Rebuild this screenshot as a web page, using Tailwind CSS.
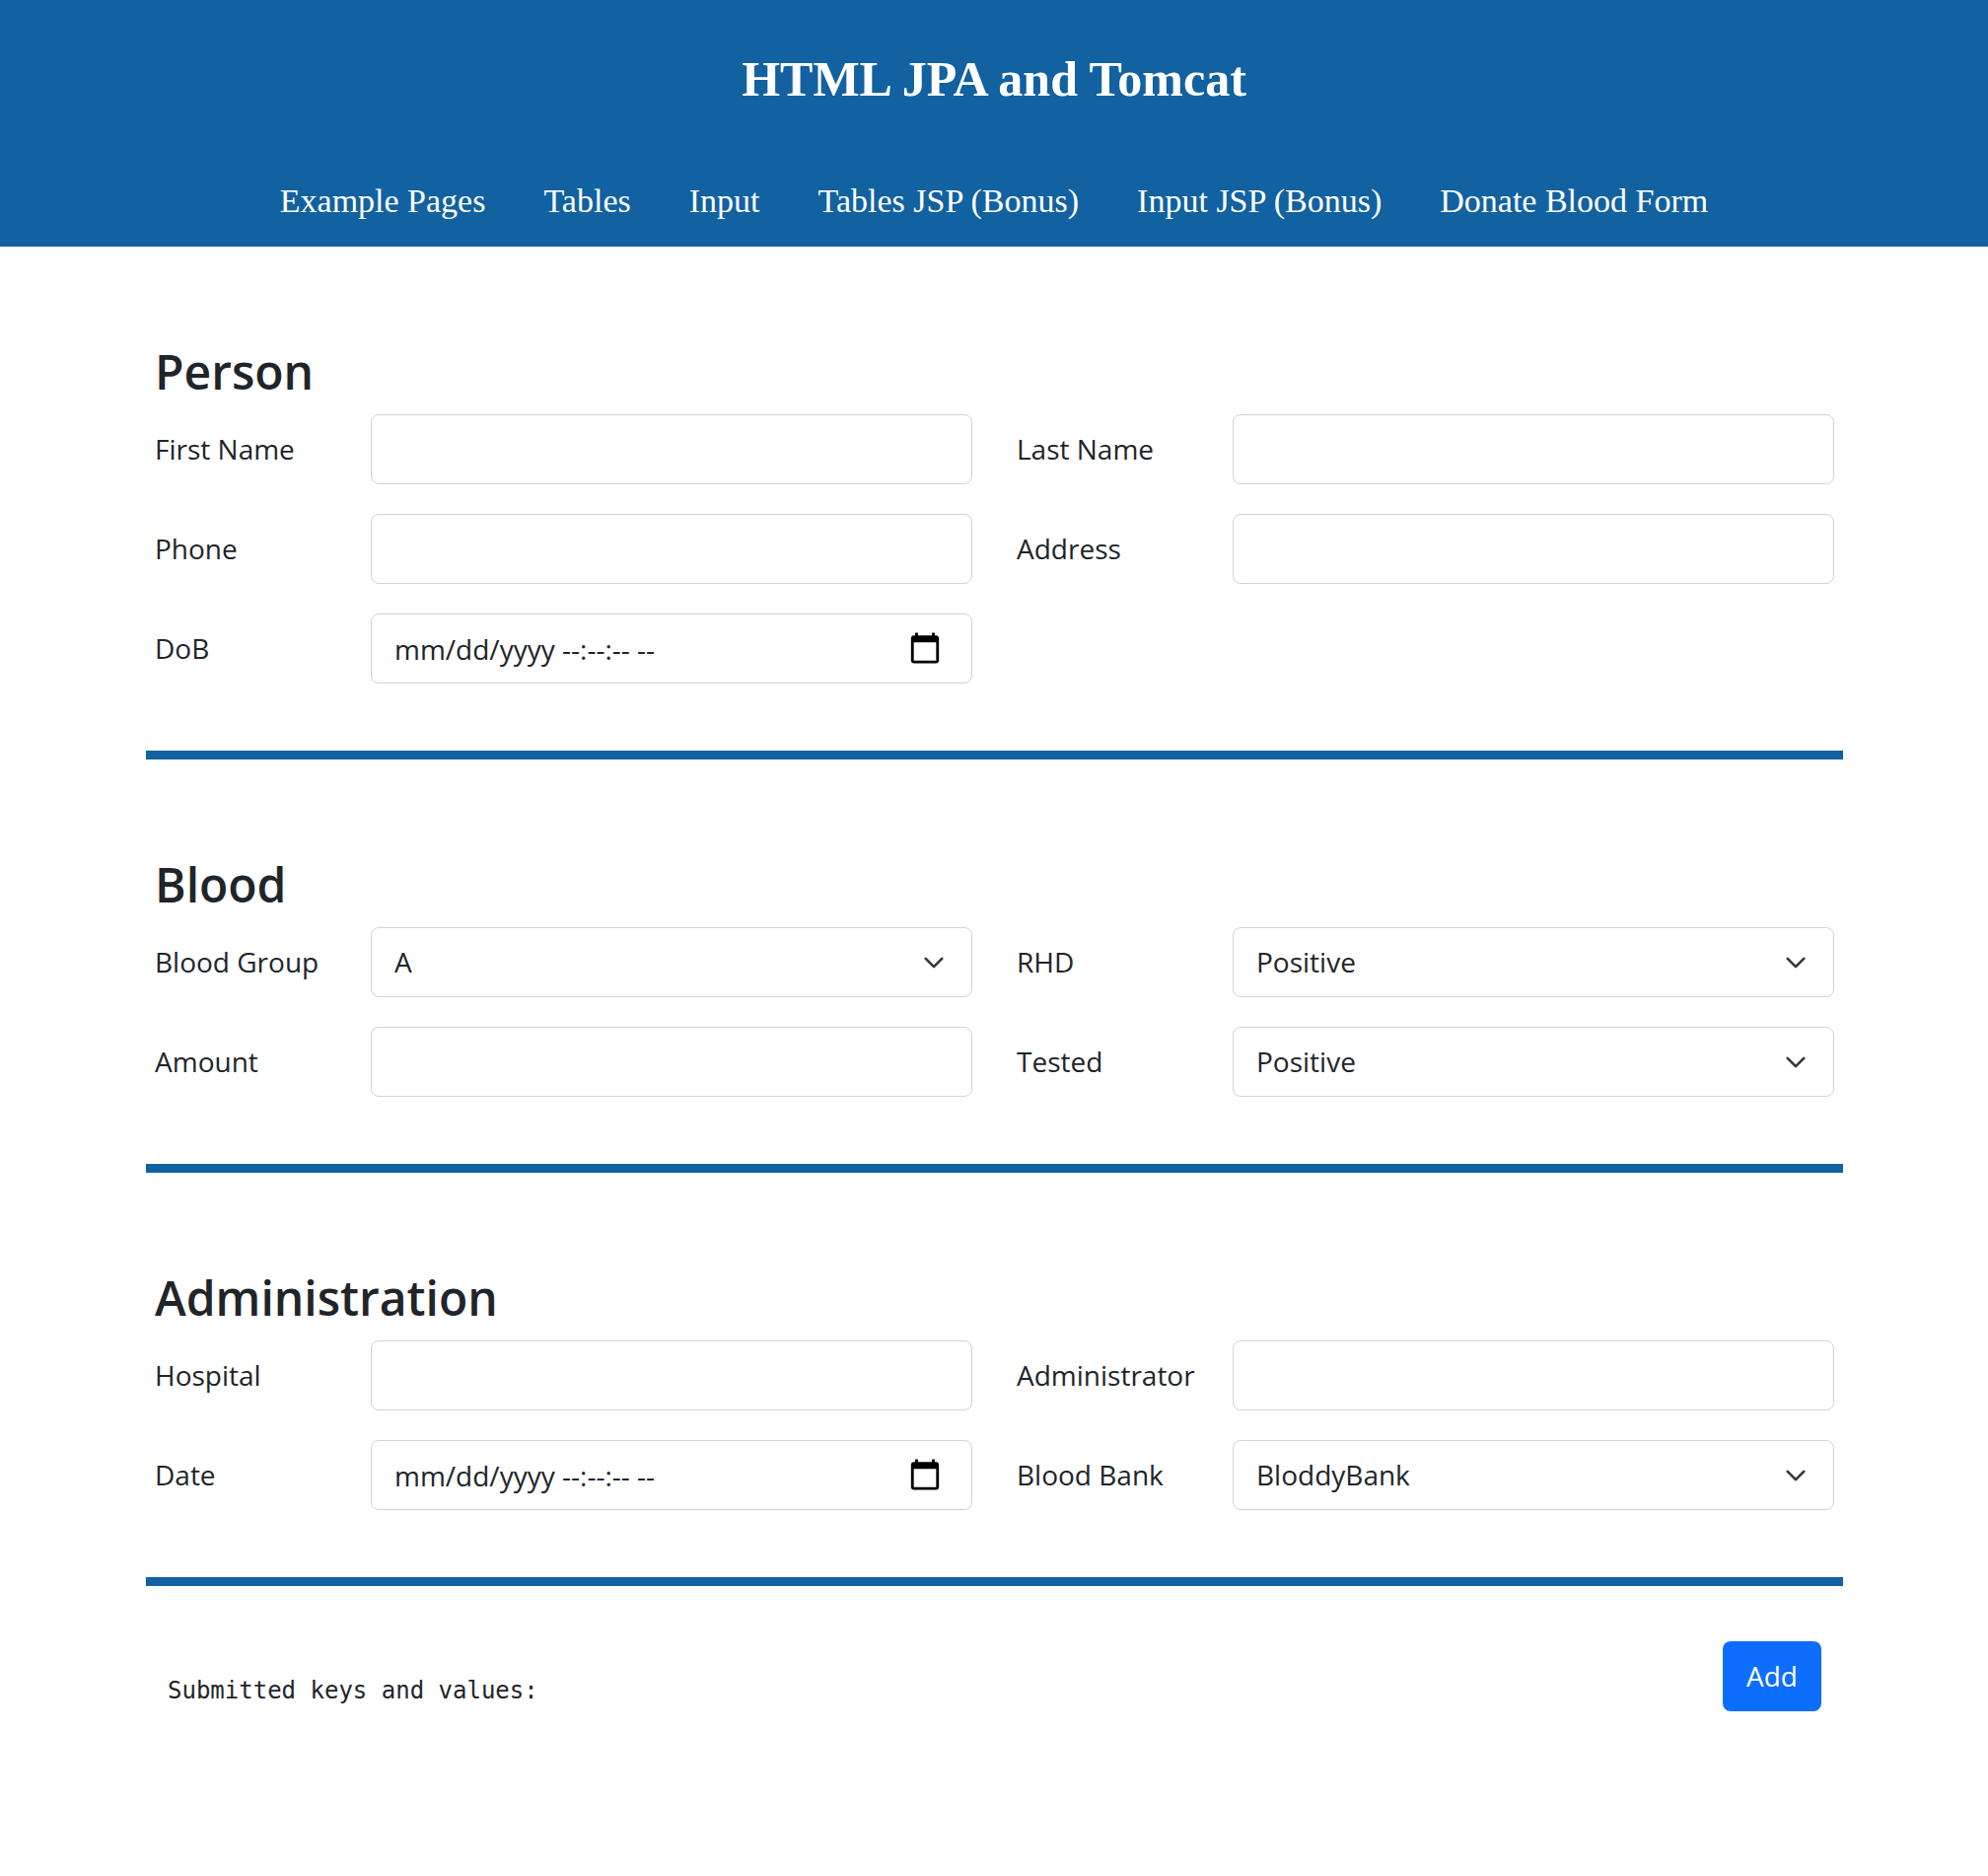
<!DOCTYPE html>
<html lang="en">
<head>
<meta charset="utf-8">
<meta name="viewport" content="width=device-width, initial-scale=1">
<title>Donate Blood Form</title>
<script src="https://cdn.jsdelivr.net/npm/@tailwindcss/browser@4"></script>
</head>
<body class="bg-white font-['Open_Sans',sans-serif] text-[28px] leading-[45px] text-[#212529]">
<header class="bg-[#1261a0] pt-[50px] pb-[24px] font-['Liberation_Serif',serif] text-white">
  <h1 class="text-center text-[50px] leading-[60px] font-bold">HTML JPA and Tomcat</h1>
  <nav class="mt-[72px] flex flex-wrap justify-center gap-x-[59px] text-[34px] leading-[44px]">
    <a href="#">Example Pages</a>
    <a href="#">Tables</a>
    <a href="#">Input</a>
    <a href="#">Tables JSP (Bonus)</a>
    <a href="#">Input JSP (Bonus)</a>
    <a href="#">Donate Blood Form</a>
  </nav>
</header>
<main class="pr-[147px] pb-[120px] pl-[148px]">
  <form>
    <section class="border-b-9 border-[#1261a0] px-[9px] pt-[95px] pb-[68px]">
      <h2 class="mb-[12px] text-[48px] leading-[63px] font-semibold">Person</h2>
      <div class="grid grid-cols-2 gap-x-[45px] gap-y-[30px]">
        <div class="flex items-center">
          <label for="first" class="w-[219px] shrink-0">First Name</label>
          <input id="first" type="text" class="h-[71px] min-w-0 flex-1 rounded-[8px] border border-[#ced4da] px-[23px]">
        </div>
        <div class="flex items-center">
          <label for="last" class="w-[219px] shrink-0">Last Name</label>
          <input id="last" type="text" class="h-[71px] min-w-0 flex-1 rounded-[8px] border border-[#ced4da] px-[23px]">
        </div>
        <div class="flex items-center">
          <label for="phone" class="w-[219px] shrink-0">Phone</label>
          <input id="phone" type="tel" class="h-[71px] min-w-0 flex-1 rounded-[8px] border border-[#ced4da] px-[23px]">
        </div>
        <div class="flex items-center">
          <label for="address" class="w-[219px] shrink-0">Address</label>
          <input id="address" type="text" class="h-[71px] min-w-0 flex-1 rounded-[8px] border border-[#ced4da] px-[23px]">
        </div>
        <div class="flex items-center">
          <label for="dob" class="w-[219px] shrink-0">DoB</label>
          <div class="relative min-w-0 flex-1">
            <input id="dob" type="text" placeholder="mm/dd/yyyy --:--:-- --" class="block h-[71px] w-full rounded-[8px] border border-[#ced4da] pr-[70px] pl-[23px] placeholder:text-[#212529]">
            <button type="button" aria-label="Pick date of birth" class="absolute top-[18px] right-[31px] text-black"><svg class="size-[34px]" viewBox="0 0 24 24" fill="currentColor"><path d="M20 3h-1V1h-2v2H7V1H5v2H4c-1.1 0-2 .9-2 2v16c0 1.1.9 2 2 2h16c1.1 0 2-.9 2-2V5c0-1.1-.9-2-2-2zm0 18H4V8h16v13z"/></svg></button>
          </div>
        </div>
      </div>
    </section>
    <section class="border-b-9 border-[#1261a0] px-[9px] pt-[95px] pb-[68px]">
      <h2 class="mb-[12px] text-[48px] leading-[63px] font-semibold">Blood</h2>
      <div class="grid grid-cols-2 gap-x-[45px] gap-y-[30px]">
        <div class="flex items-center">
          <label for="group" class="w-[219px] shrink-0">Blood Group</label>
          <div class="relative min-w-0 flex-1">
            <select id="group" class="block h-[71px] w-full appearance-none rounded-[8px] border border-[#ced4da] px-[23px]"><option>A</option><option>B</option><option>AB</option><option>O</option></select>
            <svg class="pointer-events-none absolute top-[25px] right-[28px] size-[22px]" viewBox="0 0 16 16" fill="none" stroke="#343a40" stroke-width="2" stroke-linecap="round" stroke-linejoin="round"><path d="m2 5 6 6 6-6"/></svg>
          </div>
        </div>
        <div class="flex items-center">
          <label for="rhd" class="w-[219px] shrink-0">RHD</label>
          <div class="relative min-w-0 flex-1">
            <select id="rhd" class="block h-[71px] w-full appearance-none rounded-[8px] border border-[#ced4da] px-[23px]"><option>Positive</option><option>Negative</option></select>
            <svg class="pointer-events-none absolute top-[25px] right-[28px] size-[22px]" viewBox="0 0 16 16" fill="none" stroke="#343a40" stroke-width="2" stroke-linecap="round" stroke-linejoin="round"><path d="m2 5 6 6 6-6"/></svg>
          </div>
        </div>
        <div class="flex items-center">
          <label for="amount" class="w-[219px] shrink-0">Amount</label>
          <input id="amount" type="text" class="h-[71px] min-w-0 flex-1 rounded-[8px] border border-[#ced4da] px-[23px]">
        </div>
        <div class="flex items-center">
          <label for="tested" class="w-[219px] shrink-0">Tested</label>
          <div class="relative min-w-0 flex-1">
            <select id="tested" class="block h-[71px] w-full appearance-none rounded-[8px] border border-[#ced4da] px-[23px]"><option>Positive</option><option>Negative</option></select>
            <svg class="pointer-events-none absolute top-[25px] right-[28px] size-[22px]" viewBox="0 0 16 16" fill="none" stroke="#343a40" stroke-width="2" stroke-linecap="round" stroke-linejoin="round"><path d="m2 5 6 6 6-6"/></svg>
          </div>
        </div>
      </div>
    </section>
    <section class="border-b-9 border-[#1261a0] px-[9px] pt-[95px] pb-[68px]">
      <h2 class="mb-[12px] text-[48px] leading-[63px] font-semibold">Administration</h2>
      <div class="grid grid-cols-2 gap-x-[45px] gap-y-[30px]">
        <div class="flex items-center">
          <label for="hospital" class="w-[219px] shrink-0">Hospital</label>
          <input id="hospital" type="text" class="h-[71px] min-w-0 flex-1 rounded-[8px] border border-[#ced4da] px-[23px]">
        </div>
        <div class="flex items-center">
          <label for="admin" class="w-[219px] shrink-0">Administrator</label>
          <input id="admin" type="text" class="h-[71px] min-w-0 flex-1 rounded-[8px] border border-[#ced4da] px-[23px]">
        </div>
        <div class="flex items-center">
          <label for="date" class="w-[219px] shrink-0">Date</label>
          <div class="relative min-w-0 flex-1">
            <input id="date" type="text" placeholder="mm/dd/yyyy --:--:-- --" class="block h-[71px] w-full rounded-[8px] border border-[#ced4da] pr-[70px] pl-[23px] placeholder:text-[#212529]">
            <button type="button" aria-label="Pick donation date" class="absolute top-[18px] right-[31px] text-black"><svg class="size-[34px]" viewBox="0 0 24 24" fill="currentColor"><path d="M20 3h-1V1h-2v2H7V1H5v2H4c-1.1 0-2 .9-2 2v16c0 1.1.9 2 2 2h16c1.1 0 2-.9 2-2V5c0-1.1-.9-2-2-2zm0 18H4V8h16v13z"/></svg></button>
          </div>
        </div>
        <div class="flex items-center">
          <label for="bank" class="w-[219px] shrink-0">Blood Bank</label>
          <div class="relative min-w-0 flex-1">
            <select id="bank" class="block h-[71px] w-full appearance-none rounded-[8px] border border-[#ced4da] px-[23px]"><option>BloddyBank</option></select>
            <svg class="pointer-events-none absolute top-[25px] right-[28px] size-[22px]" viewBox="0 0 16 16" fill="none" stroke="#343a40" stroke-width="2" stroke-linecap="round" stroke-linejoin="round"><path d="m2 5 6 6 6-6"/></svg>
          </div>
        </div>
      </div>
    </section>
    <div class="flex items-start justify-between px-[22px] pt-[56px]">
      <pre class="pt-[30px] font-['DejaVu_Sans_Mono',monospace] text-[24px] leading-[40px]">Submitted keys and values:</pre>
      <button type="button" class="h-[71px] rounded-[8px] bg-[#0d6efd] px-[24px] text-white">Add</button>
    </div>
  </form>
</main>
</body>
</html>
